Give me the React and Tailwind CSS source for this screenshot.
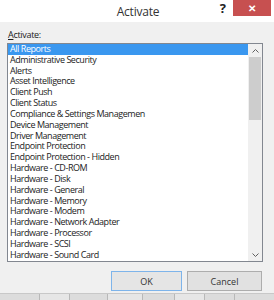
const items = [
  "All Reports",
  "Administrative Security",
  "Alerts",
  "Asset Intelligence",
  "Client Push",
  "Client Status",
  "Compliance & Settings Managemen",
  "Device Management",
  "Driver Management",
  "Endpoint Protection",
  "Endpoint Protection - Hidden",
  "Hardware - CD-ROM",
  "Hardware - Disk",
  "Hardware - General",
  "Hardware - Memory",
  "Hardware - Modem",
  "Hardware - Network Adapter",
  "Hardware - Processor",
  "Hardware - SCSI",
  "Hardware - Sound Card",
];

export default function App() {
  return (
    <div
      className="w-[274px] h-[300px] bg-[#f0f0f0] flex flex-col overflow-hidden text-[#1b1b1b]"
      style={{ fontFamily: '"Open Sans", Lato, sans-serif' }}
    >
      <div className="relative h-[22px] bg-white shrink-0">
        <div className="w-full text-center text-[12px] tracking-[-0.2px] leading-[24px] text-[#333] pl-[2px]">
          Activate
        </div>
        <div className="absolute top-0 right-[3px] flex items-start">
          <span className="text-[13px] font-bold leading-[17px] mr-[7px] text-[#222]">?</span>
          <div className="w-[38px] h-[16px] bg-[#c75050] flex items-center justify-center text-white text-[10px] font-bold leading-none">
            ✕
          </div>
        </div>
      </div>

      <div className="flex flex-col px-[7px] pt-[7px]">
        <div className="text-[9px] tracking-[-0.3px] leading-[12px] pl-[1px] mb-[2px]">
          <span className="underline">A</span>ctivate:
        </div>

        <div className="flex w-[256px] h-[219px] border border-[#828790] bg-white">
          <div className="flex-1 flex flex-col overflow-hidden">
            {items.map((item, i) => (
              <div
                key={item}
                className={
                  "h-[10.84px] shrink-0 pl-[2px] text-[9px] tracking-[-0.45px] leading-[10.84px] whitespace-nowrap " +
                  (i === 0 ? "bg-[#3a97ef] text-white" : "")
                }
              >
                {item}
              </div>
            ))}
          </div>
          <div className="w-[14px] bg-[#f0f0f0] flex flex-col">
            <div className="h-[13px] flex items-center justify-center">
              <svg width="7" height="4" viewBox="0 0 7 4">
                <path d="M0.5 3.5 L3.5 0.5 L6.5 3.5" fill="none" stroke="#606060" strokeWidth="1" />
              </svg>
            </div>
            <div className="h-[63px] mx-[1px] bg-[#cdcdcd]" />
            <div className="flex-1" />
            <div className="h-[13px] flex items-center justify-center">
              <svg width="7" height="4" viewBox="0 0 7 4">
                <path d="M0.5 0.5 L3.5 3.5 L6.5 0.5" fill="none" stroke="#606060" strokeWidth="1" />
              </svg>
            </div>
          </div>
        </div>

        <div className="flex justify-end gap-[5px] mt-[9px] pr-[5px]">
          <button className="w-[71px] h-[20px] border border-[#7eb4ea] bg-[#e5e5e5] text-[9px] leading-none text-[#333]">
            OK
          </button>
          <button className="w-[75px] h-[20px] border border-[#adadad] bg-[#e1e1e1] text-[9px] leading-none text-[#333]">
            Cancel
          </button>
        </div>
      </div>

      <div className="mt-auto h-[7px] flex bg-[#dcdcdc] border-t border-[#c8c8c8]">
        <div className="w-[40px] border-r border-[#b8b8b8]" />
        <div className="w-[30px] border-r border-[#b8b8b8] bg-[#e6e6e6]" />
        <div className="w-[38px] border-r border-[#b8b8b8]" />
        <div className="w-[35px] border-r border-[#b8b8b8] bg-[#e6e6e6]" />
        <div className="w-[32px] border-r border-[#b8b8b8]" />
        <div className="w-[30px] border-r border-[#b8b8b8] bg-[#e6e6e6]" />
        <div className="w-[30px] border-r border-[#b8b8b8]" />
        <div className="flex-1" />
      </div>
    </div>
  );
}
